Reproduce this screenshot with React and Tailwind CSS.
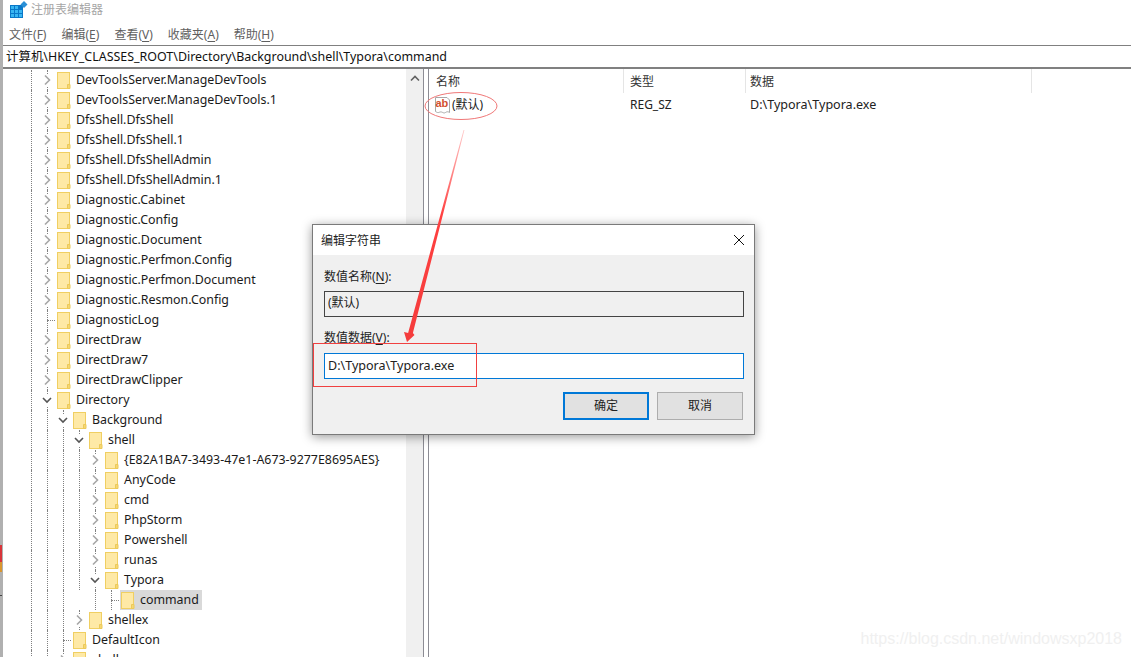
const UI = { fontFamily: '"Noto Sans","Noto Sans CJK SC",sans-serif' };
const rows = [
  ["DevToolsServer.ManageDevTools", 0, "c"],
  ["DevToolsServer.ManageDevTools.1", 0, "c"],
  ["DfsShell.DfsShell", 0, "c"],
  ["DfsShell.DfsShell.1", 0, "c"],
  ["DfsShell.DfsShellAdmin", 0, "c"],
  ["DfsShell.DfsShellAdmin.1", 0, "c"],
  ["Diagnostic.Cabinet", 0, "c"],
  ["Diagnostic.Config", 0, "c"],
  ["Diagnostic.Document", 0, "c"],
  ["Diagnostic.Perfmon.Config", 0, "c"],
  ["Diagnostic.Perfmon.Document", 0, "c"],
  ["Diagnostic.Resmon.Config", 0, "c"],
  ["DiagnosticLog", 0, "l"],
  ["DirectDraw", 0, "c"],
  ["DirectDraw7", 0, "c"],
  ["DirectDrawClipper", 0, "c"],
  ["Directory", 0, "o"],
  ["Background", 1, "o"],
  ["shell", 2, "o"],
  ["{E82A1BA7-3493-47e1-A673-9277E8695AES}", 3, "c"],
  ["AnyCode", 3, "c"],
  ["cmd", 3, "c"],
  ["PhpStorm", 3, "c"],
  ["Powershell", 3, "c"],
  ["runas", 3, "c"],
  ["Typora", 3, "o"],
  ["command", 4, "l", true],
  ["shellex", 2, "c"],
  ["DefaultIcon", 1, "l"],
  ["shell", 1, "c"],
];

function Folder() {
  return (
    <svg width="14" height="17" viewBox="0 0 14 17" className="shrink-0">
      <rect x="0.5" y="0.5" width="12" height="16" fill="#fde58f" stroke="#f0cf62" />
      <rect x="1" y="1" width="11" height="15" fill="#fee9a6" />
      <path d="M10.5 16.5v-4h2.5v4z" fill="#f6d872" stroke="#ecc95a" />
    </svg>
  );
}

function Chevron({ open }) {
  return (
    <svg width="12" height="12" viewBox="0 0 12 12" className="relative bg-white">
      {open ? (
        <path d="M2 4l4 4 4-4" fill="none" stroke="#555" strokeWidth="1.6" />
      ) : (
        <path d="M4 1.5l4.5 4.5L4 10.5" fill="none" stroke="#a6a6a6" strokeWidth="1.6" />
      )}
    </svg>
  );
}

function Guide({ active }) {
  return (
    <div className="relative h-5 w-4 shrink-0">
      {active && <div className="absolute left-2 top-0 h-5 w-0 border-l border-dotted border-[#808080]" />}
    </div>
  );
}

function Row({ name, depth, kind, selected }) {
  const guides = Array.from({ length: depth + 1 }, (_, i) => i);
  return (
    <div className="flex h-5 items-center">
      {guides.map((i) => (
        <Guide key={i} active={!(depth === 4 && i === 3)} />
      ))}
      <div className="relative flex h-5 w-4 shrink-0 items-center justify-center">
        <div className="absolute left-2 top-0 h-5 w-0 border-l border-dotted border-[#808080]" />
        {kind === "l" ? (
          <div className="absolute left-2 top-[10px] h-0 w-2 border-t border-dotted border-[#808080]" />
        ) : (
          <Chevron open={kind === "o"} />
        )}
      </div>
      <div className={`ml-[1px] flex h-5 items-center pl-[1px] ${selected ? "bg-[#d9d9d9]" : ""}`}>
        <Folder />
        <span className="ml-[5px] whitespace-nowrap pr-[3px] text-[12.4px] leading-5 text-[#1a1a1a]">{name}</span>
      </div>
    </div>
  );
}

function AbIcon() {
  return (
    <svg width="17" height="18" viewBox="0 0 17 18" className="shrink-0">
      <path d="M1.5 1.5h11.5l2.5 2.5v12.5c-1.5-1-2.5-1-4 0s-2.5 0-4-.5-3 1-4 .5-1.5-.5-2-1z" fill="#fff" stroke="#a9a9a9" />
      <text x="1.5" y="10.5" fontSize="11" fontWeight="700" fill="#d24f2f" fontFamily="Liberation Sans">ab</text>
    </svg>
  );
}

function Menu({ label, k }) {
  return (
    <span className="whitespace-nowrap">
      {label}(<span className="underline underline-offset-2">{k}</span>)
    </span>
  );
}

function Dialog() {
  return (
    <div className="absolute left-[312px] top-[224px] flex h-[211px] w-[443px] flex-col border border-[#7a7a7a] bg-[#f0f0f0] shadow-[0_2px_10px_rgba(0,0,0,0.4)]">
      <div className="flex h-[30px] items-center justify-between bg-white pl-[8px] pr-[9px] text-[12px] text-[#222]">
        <span className="pt-[2px]">编辑字符串</span>
        <svg width="12" height="12" viewBox="0 0 12 12"><path d="M1 1l10 10M11 1L1 11" stroke="#111" strokeWidth="1" fill="none" /></svg>
      </div>
      <div className="flex flex-1 flex-col px-[11px] text-[12px] text-[#222]">
        <div className="mt-[13px] h-[18px] leading-[18px]">数值名称(<span className="underline underline-offset-2">N</span>):</div>
        <div className="mt-[5px] flex h-[26px] w-[420px] items-center border border-[#444] bg-[#f0f0f0] px-[3px] pb-[2px] text-[12px]">(默认)</div>
        <div className="mt-[12px] h-[18px] leading-[18px]">数值数据(<span className="underline underline-offset-2">V</span>):</div>
        <div className="mt-[6px] flex h-[26px] w-[420px] items-center border border-[#0078d7] bg-white px-[3px] text-[12.55px]">D:\Typora\Typora.exe</div>
        <div className="mt-[13px] flex w-[420px] justify-end gap-[8px] pr-[1px]">
          <div className="flex h-[28px] w-[86px] items-center justify-center border-2 border-[#0078d7] bg-[#e1e1e1] text-[12px]">确定</div>
          <div className="flex h-[28px] w-[86px] items-center justify-center border border-[#adadad] bg-[#e1e1e1] text-[12px]">取消</div>
        </div>
      </div>
    </div>
  );
}

export default function App() {
  return (
    <div className="relative h-[657px] w-[1131px] overflow-hidden bg-white" style={UI}>
      <div className="flex h-full flex-col border-l-[3px] border-[#b0b0b0]">
        <div className="flex h-[19px] items-center pl-[7px]">
          <svg width="19" height="18" viewBox="0 0 19 18" className="shrink-0">
            <rect x="0" y="4" width="13" height="13" fill="#0a78c8" />
            <g fill="#39b6f2">
              <rect x="1" y="5" width="3" height="3" /><rect x="5" y="5" width="3" height="3" />
              <rect x="1" y="9" width="3" height="3" /><rect x="5" y="9" width="3" height="3" /><rect x="9" y="9" width="3" height="3" />
              <rect x="1" y="13" width="3" height="3" /><rect x="5" y="13" width="3" height="3" /><rect x="9" y="13" width="3" height="3" />
            </g>
            <path d="M14 0l3.5 3.5L14 7l-3.5-3.5z" fill="#2a8fd6" />
          </svg>
          <span className="ml-[2px] text-[12px] text-[#a6a6a6]">注册表编辑器</span>
        </div>
        <div className="flex h-[26px] items-center gap-[15px] pl-[6px] pt-[6px] text-[12px] text-[#5f5f5f]">
          <Menu label="文件" k="F" />
          <Menu label="编辑" k="E" />
          <Menu label="查看" k="V" />
          <Menu label="收藏夹" k="A" />
          <Menu label="帮助" k="H" />
        </div>
        <div className="flex h-[24px] items-center border-t border-b-[2px] border-[#808080] pl-[3px] pt-[2px] text-[12.45px] text-[#111]">
          计算机\HKEY_CLASSES_ROOT\Directory\Background\shell\Typora\command
        </div>
        <div className="flex min-h-0 flex-1">
          <div className="w-[403px] min-w-0 overflow-hidden pl-[20px] pt-[1px]">
            {rows.map((r, i) => (
              <Row key={i} name={r[0]} depth={r[1]} kind={r[2]} selected={r[3]} />
            ))}
          </div>
          <div className="flex w-[17px] shrink-0 justify-center bg-[#f0f0f0] pt-[6px]">
            <svg width="10" height="7" viewBox="0 0 10 7"><path d="M1 5.5l4-4 4 4" fill="none" stroke="#606060" strokeWidth="1.6" /></svg>
          </div>
          <div className="w-[6px] shrink-0 border-x border-[#8c8c94] bg-white" />
          <div className="min-w-0 flex-1">
            <div className="flex h-[24px] text-[12px] text-[#333]">
              <div className="w-[195px] border-r border-[#e5e5e5] pl-[7px] pt-[1px] leading-[24px]">名称</div>
              <div className="w-[122px] border-r border-[#e5e5e5] pl-[6px] pt-[1px] leading-[24px]">类型</div>
              <div className="w-[286px] border-r border-[#e5e5e5] pl-[4px] pt-[1px] leading-[24px]">数据</div>
            </div>
            <div className="flex h-[22px] items-center pt-[2px] text-[12px] text-[#222]">
              <div className="flex w-[195px] items-center pl-[5px]">
                <AbIcon />
                <span className="ml-[1px]">(默认)</span>
              </div>
              <div className="w-[122px] pl-[6px]">REG_SZ</div>
              <div className="pl-[4px] text-[12.55px]">D:\Typora\Typora.exe</div>
            </div>
          </div>
        </div>
      </div>
      <Dialog />
      <svg className="pointer-events-none absolute left-0 top-0" width="1131" height="657" viewBox="0 0 1131 657">
        <defs>
          <linearGradient id="arrowFade" x1="464" y1="130" x2="407" y2="342" gradientUnits="userSpaceOnUse">
            <stop offset="0" stopColor="#ff4a4a" stopOpacity="0.3" />
            <stop offset="0.4" stopColor="#ff4040" />
            <stop offset="1" stopColor="#f43c3c" />
          </linearGradient>
        </defs>
        <ellipse cx="461" cy="106" rx="36" ry="13.5" fill="none" stroke="#f07878" strokeWidth="1" />
        <path d="M463.6 130L464.4 130L412.9 333L414.5 335L407 342L404 332L408.1 333Z" fill="url(#arrowFade)" />
        <rect x="313.5" y="343.5" width="163" height="43" fill="none" stroke="#f04040" strokeWidth="1" />
      </svg>
      <div className="pointer-events-none absolute bottom-[6px] right-[9px] text-[16px] text-[#f0f0f0]" style={{ fontFamily: '"Liberation Sans",sans-serif' }}>
        https://blog.csdn.net/windowsxp2018
      </div>
      <div className="absolute left-0 top-[545px] flex h-[27px] w-[2px] flex-col">
        <div className="h-[17px] bg-[#d8343a]" />
        <div className="h-[10px] bg-[#d9962f]" />
      </div>
      <div className="absolute left-0 top-[595px] h-px w-[2px] bg-[#444]" />
    </div>
  );
}
